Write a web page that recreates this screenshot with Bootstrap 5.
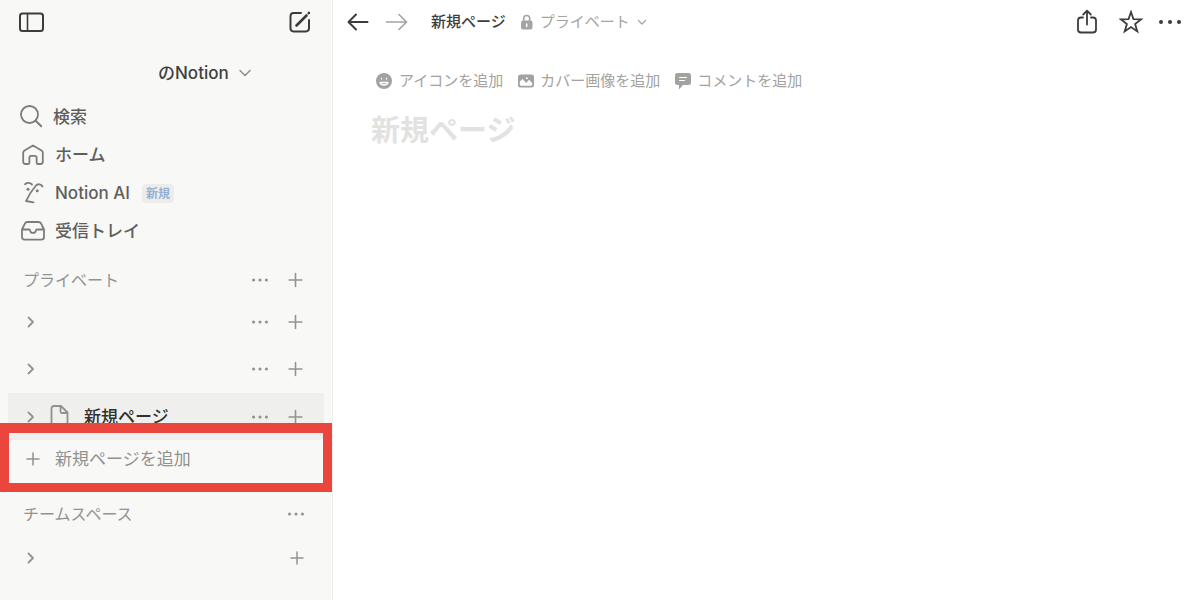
<!DOCTYPE html>
<html lang="ja">
<head>
<meta charset="utf-8">
<meta name="viewport" content="width=device-width, initial-scale=1">
<title>新規ページ</title>
<link href="https://cdn.jsdelivr.net/npm/bootstrap@5.3.0/dist/css/bootstrap.min.css" rel="stylesheet">
<style>
  body { font-family: Inter, "Noto Sans CJK JP", sans-serif; font-size: 17px; line-height: 24px; color: #37352f; background: #fff; }
  button { border: 0; padding: 0; background: transparent; color: inherit; line-height: inherit; display: flex; align-items: center; }
  a { color: inherit; text-decoration: none; }
  svg { display: block; flex: none; fill: none; stroke: currentColor; stroke-width: 2; stroke-linecap: round; stroke-linejoin: round; }
  .solid { fill: currentColor; stroke: none; }
  .sidebar { width: 333px; background: #f8f8f7; border-right: 1px solid #eeeeed; }
  .bar { height: 44px; color: #3d3c3a; }
  .bar-side { padding: 0 20px 0 18px; }
  .workspace { height: 54px; padding: 4px 0 0 158px; gap: 8px; font-weight: 500; color: #403f3c; }
  .workspace svg { color: #8f8e8a; }
  .entry { height: 38px; padding: 0 20px; gap: 9px; color: #5f5e5b; font-weight: 500; }
  .entry svg { color: #7d7c78; }
  .flag { font-size: 12px; line-height: 19px; padding: 0 4px; margin-left: 3px; border-radius: 4px; background: #ececeb; color: #94b1d6; font-weight: 700; }
  .group-head { height: 38px; padding: 0 23px; margin-top: 11px; font-size: 16px; color: #94938f; }
  .tree-row { height: 47px; margin: 0 8px; padding: 0 15px; color: #94938f; }
  .tree-row:not(.current) { padding-bottom: 1px; }
  .tree-row.current { background: #efefee; }
  .tree-row.current a { color: #32302c; font-weight: 500; gap: 14px; margin-left: 11px; }
  .tree-row.current a svg { color: #91918e; }
  .tools { gap: 18px; margin-right: 5px; }
  .add-row { height: 38px; padding: 0 25px; gap: 14px; color: #91918e; }
  .highlight { inset: -17px 0 -14px 0; border: 9px solid #eb463d; border-top-width: 10px; pointer-events: none; }
  .team { margin-top: 17px; }
  .team-row { margin-top: 2px; }
  .bar-main { padding: 0 19px 0 14px; font-size: 15px; }
  .muted-ink { color: #a5a4a0; }
  .crumbs { gap: 14px; margin-left: 22px; }
  .place { gap: 6px; }
  .page-tools { padding: 25px 41px 0; gap: 14px; font-size: 15px; color: #a3a29e; }
  .page-tools button { gap: 5px; }
  .page-title { padding: 0 38px; margin: 18px 0 0; font-size: 29px; line-height: 40px; font-weight: 700; color: #e2e2e0; }
</style>
</head>
<body>
<svg class="d-none" aria-hidden="true">
  <symbol id="plus" viewBox="0 0 16 16"><path d="M8 2v12M2 8h12" stroke-width="1.5"/></symbol>
  <symbol id="dots" viewBox="0 0 16 16"><g fill="currentColor" stroke="none"><circle cx="2.300" cy="8" r="1.400"/><circle cx="8" cy="8" r="1.400"/><circle cx="13.700" cy="8" r="1.400"/></g></symbol>
  <symbol id="chev" viewBox="0 0 16 16"><path d="M5.500 3.500 10 8l-4.500 4.500" stroke-width="1.800"/></symbol>
</svg>
<div class="d-flex min-vh-100">
  <nav class="sidebar flex-shrink-0" aria-label="サイドバー">
    <div class="bar bar-side d-flex align-items-center justify-content-between">
      <button aria-label="サイドバーを閉じる"><svg width="27" height="24" viewBox="0 0 27 24"><rect x="2" y="3.500" width="23" height="17.500" rx="2.500"/><path d="M9.500 3.500V21" stroke-width="1.600"/></svg></button>
      <button aria-label="新規作成"><svg width="24" height="24" viewBox="0 0 24 24"><path d="M13 3H5.500A3.200 3.200 0 0 0 2.500 6v12.500A3.200 3.200 0 0 0 5.500 21.500h12.500a3.200 3.200 0 0 0 3-3V10"/><path d="M8.500 15.500 18.500 5.500" stroke-width="2.600"/><path d="m20.700 3.200.2-.2" stroke-width="2.600"/></svg></button>
    </div>
    <button class="workspace w-100"><span>のNotion</span><svg width="16" height="16" viewBox="0 0 16 16"><path d="m3 5.500 5 5 5-5" stroke-width="1.500"/></svg></button>
    <a href="#" class="entry d-flex align-items-center"><svg width="24" height="24" viewBox="0 0 24 24"><circle cx="9.500" cy="9.500" r="8.500" stroke-width="1.800"/><path d="m15.700 15.700 5.500 5.500" stroke-width="2"/></svg><span>検索</span></a>
    <a href="#" class="entry d-flex align-items-center"><svg width="26" height="24" viewBox="0 0 26 24"><path d="M13 2.400 21.500 7.500Q22.800 8.300 22.800 9.800v9q0 2.200-2.200 2.200h-2.800q-1.200 0-1.200-1.200v-5.300q0-1.700-1.700-1.700h-3.800q-1.700 0-1.700 1.700v5.300q0 1.200-1.200 1.200H5.400q-2.200 0-2.200-2.200v-9q0-1.500 1.300-2.300z" stroke-width="1.800"/></svg><span>ホーム</span></a>
    <a href="#" class="entry d-flex align-items-center"><svg width="26" height="24" viewBox="0 0 26 24"><g stroke-width="1.800"><path d="M5 3.200c2-1.700 5-1.700 7 .3"/><path d="M22.500 5.500c-1.500-2.500-4.500-3-6.500-1-3.500 4-7.500 10-10 15.500l7.500 1.300"/></g><circle class="solid" cx="8" cy="8.300" r="1.500"/><circle class="solid" cx="17.200" cy="9.700" r="1.500"/></svg><span>Notion AI</span><span class="flag">新規</span></a>
    <a href="#" class="entry d-flex align-items-center"><svg width="26" height="24" viewBox="0 0 26 24"><path d="m2 10.500 3-6.200Q5.800 3 7.500 3h11q1.700 0 2.500 1.300l3 6.200v7.500q0 2.600-2.600 2.600H4.600Q2 20.600 2 18zH9q1 0 1.200 1.200c.6 3 5 3 5.600 0q.2-1.200 1.200-1.200h7" stroke-width="1.800"/></svg><span>受信トレイ</span></a>

    <div class="group-head d-flex align-items-center justify-content-between"><span>プライベート</span>
      <span class="tools d-flex"><button aria-label="メニュー"><svg width="18" height="18"><use href="#dots"/></svg></button><button aria-label="追加"><svg width="17" height="18"><use href="#plus"/></svg></button></span></div>
    <div class="tree-row d-flex align-items-center justify-content-between"><button aria-label="開く"><svg width="16" height="16"><use href="#chev"/></svg></button>
      <span class="tools d-flex"><button aria-label="メニュー"><svg width="18" height="18"><use href="#dots"/></svg></button><button aria-label="追加"><svg width="17" height="18"><use href="#plus"/></svg></button></span></div>
    <div class="tree-row d-flex align-items-center justify-content-between"><button aria-label="開く"><svg width="16" height="16"><use href="#chev"/></svg></button>
      <span class="tools d-flex"><button aria-label="メニュー"><svg width="18" height="18"><use href="#dots"/></svg></button><button aria-label="追加"><svg width="17" height="18"><use href="#plus"/></svg></button></span></div>
    <div class="tree-row current d-flex align-items-center"><button aria-label="開く"><svg width="16" height="16"><use href="#chev"/></svg></button>
      <a href="#" class="d-flex align-items-center flex-grow-1"><svg width="20" height="26" viewBox="0 0 20 26"><path d="M4 2h7l6.500 6.500V20q0 2.500-2.500 2.500H4Q1.500 22.500 1.500 20V4.500Q1.500 2 4 2zM10.500 2v5.500q0 1.500 1.500 1.500h5.500" stroke-width="1.800"/></svg><span>新規ページ</span></a>
      <span class="tools d-flex"><button aria-label="メニュー"><svg width="18" height="18"><use href="#dots"/></svg></button><button aria-label="追加"><svg width="17" height="18"><use href="#plus"/></svg></button></span></div>
    <div class="position-relative">
      <button class="add-row w-100"><svg width="16" height="16"><use href="#plus"/></svg><span>新規ページを追加</span></button>
      <div class="highlight position-absolute"></div>
    </div>
    <div class="group-head team d-flex align-items-center justify-content-between"><span>チームスペース</span><button class="me-1" aria-label="メニュー"><svg width="18" height="18"><use href="#dots"/></svg></button></div>
    <div class="tree-row team-row d-flex align-items-center justify-content-between"><button aria-label="開く"><svg width="16" height="16"><use href="#chev"/></svg></button><button class="me-1" aria-label="追加"><svg width="16" height="18"><use href="#plus"/></svg></button></div>
  </nav>

  <main class="flex-grow-1">
    <header class="bar bar-main d-flex align-items-center">
      <button aria-label="戻る"><svg width="22" height="22" viewBox="0 0 22 22"><path d="M20.500 11H1.500M9 3.500 1.500 11 9 18.500"/></svg></button>
      <button class="muted-ink ms-3" aria-label="進む"><svg width="24" height="22" viewBox="0 0 24 22"><path d="M1.500 11h20M14 3.500 21.500 11 14 18.500" stroke-width="1.700"/></svg></button>
      <div class="crumbs d-flex align-items-center">
        <a href="#" class="fw-medium">新規ページ</a>
        <button class="place muted-ink"><svg width="14" height="16" viewBox="0 0 14 16"><rect class="solid" x="1" y="6.500" width="11.500" height="9" rx="2"/><path d="M3.700 7V4.500a3 3 0 0 1 6 0V7" stroke-width="1.600"/><path d="M6.700 10v2.500" stroke="#fff" stroke-width="1.500"/></svg><span>プライベート</span><svg width="14" height="14" viewBox="0 0 14 14"><path d="m2.500 5.500 3.500 3.500 3.500-3.500" stroke-width="1.300"/></svg></button>
      </div>
      <div class="d-flex align-items-center gap-3 ms-auto">
        <button class="me-1" aria-label="共有"><svg width="24" height="26" viewBox="0 0 24 26"><path d="M8 8.500H6q-3 0-3 3v9q0 3 3 3h12q3 0 3-3v-9q0-3-3-3h-2M12 15.500V2M8.200 5.500 12 1.700l3.800 3.800" stroke-width="1.800"/></svg></button>
        <button aria-label="お気に入り"><svg width="24" height="24" viewBox="0 0 24 24"><path d="m12 2 2.500 7.200 7.700.1-6.100 4.700 2.200 7.400-6.300-4.400-6.300 4.400 2.200-7.400-6.100-4.700 7.700-.1z" stroke-width="1.800" stroke-linejoin="miter"/></svg></button>
        <button aria-label="その他"><svg class="solid" width="22" height="22" viewBox="0 0 22 22"><circle cx="2" cy="11" r="2"/><circle cx="11" cy="11" r="2"/><circle cx="20" cy="11" r="2"/></svg></button>
      </div>
    </header>
    <div class="page-tools d-flex">
      <button><svg width="20" height="18" viewBox="0 0 20 18"><circle class="solid" cx="10" cy="9" r="8"/><g stroke="#fff" stroke-width="1.300"><path d="M7.500 6.500v.5M12.500 6.500v.5M6 10.500c1 3.300 7 3.300 8 0z"/></g></svg><span>アイコンを追加</span></button>
      <button><svg width="18" height="18" viewBox="0 0 18 18"><rect class="solid" x="1" y="2.500" width="16" height="13" rx="2.500"/><path d="M2.800 12.500 2.800 9.500 5.500 7 8 9.500 9 11.300 12 7.800 15.200 11v1.500q0 1.300-1.300 1.300H4.100q-1.300 0-1.300-1.300z" fill="#fff" stroke="none"/><circle cx="9.800" cy="6.300" r="1" fill="#fff" stroke="none"/></svg><span>カバー画像を追加</span></button>
      <button><svg width="18" height="18" viewBox="0 0 18 18"><path class="solid" d="M3.500 1h11Q17 1 17 3.500v7q0 2.500-2.500 2.500H9l-3.500 4q-.5.300-.5-.5V13H3.500Q1 13 1 10.500v-7Q1 1 3.500 1z"/><path d="M5.500 5.500h7M5.500 8.500h5" stroke="#fff" stroke-width="1.200"/></svg><span>コメントを追加</span></button>
    </div>
    <h1 class="page-title">新規ページ</h1>
  </main>
</div>
<script src="https://cdn.jsdelivr.net/npm/bootstrap@5.3.0/dist/js/bootstrap.bundle.min.js"></script>
</body>
</html>
